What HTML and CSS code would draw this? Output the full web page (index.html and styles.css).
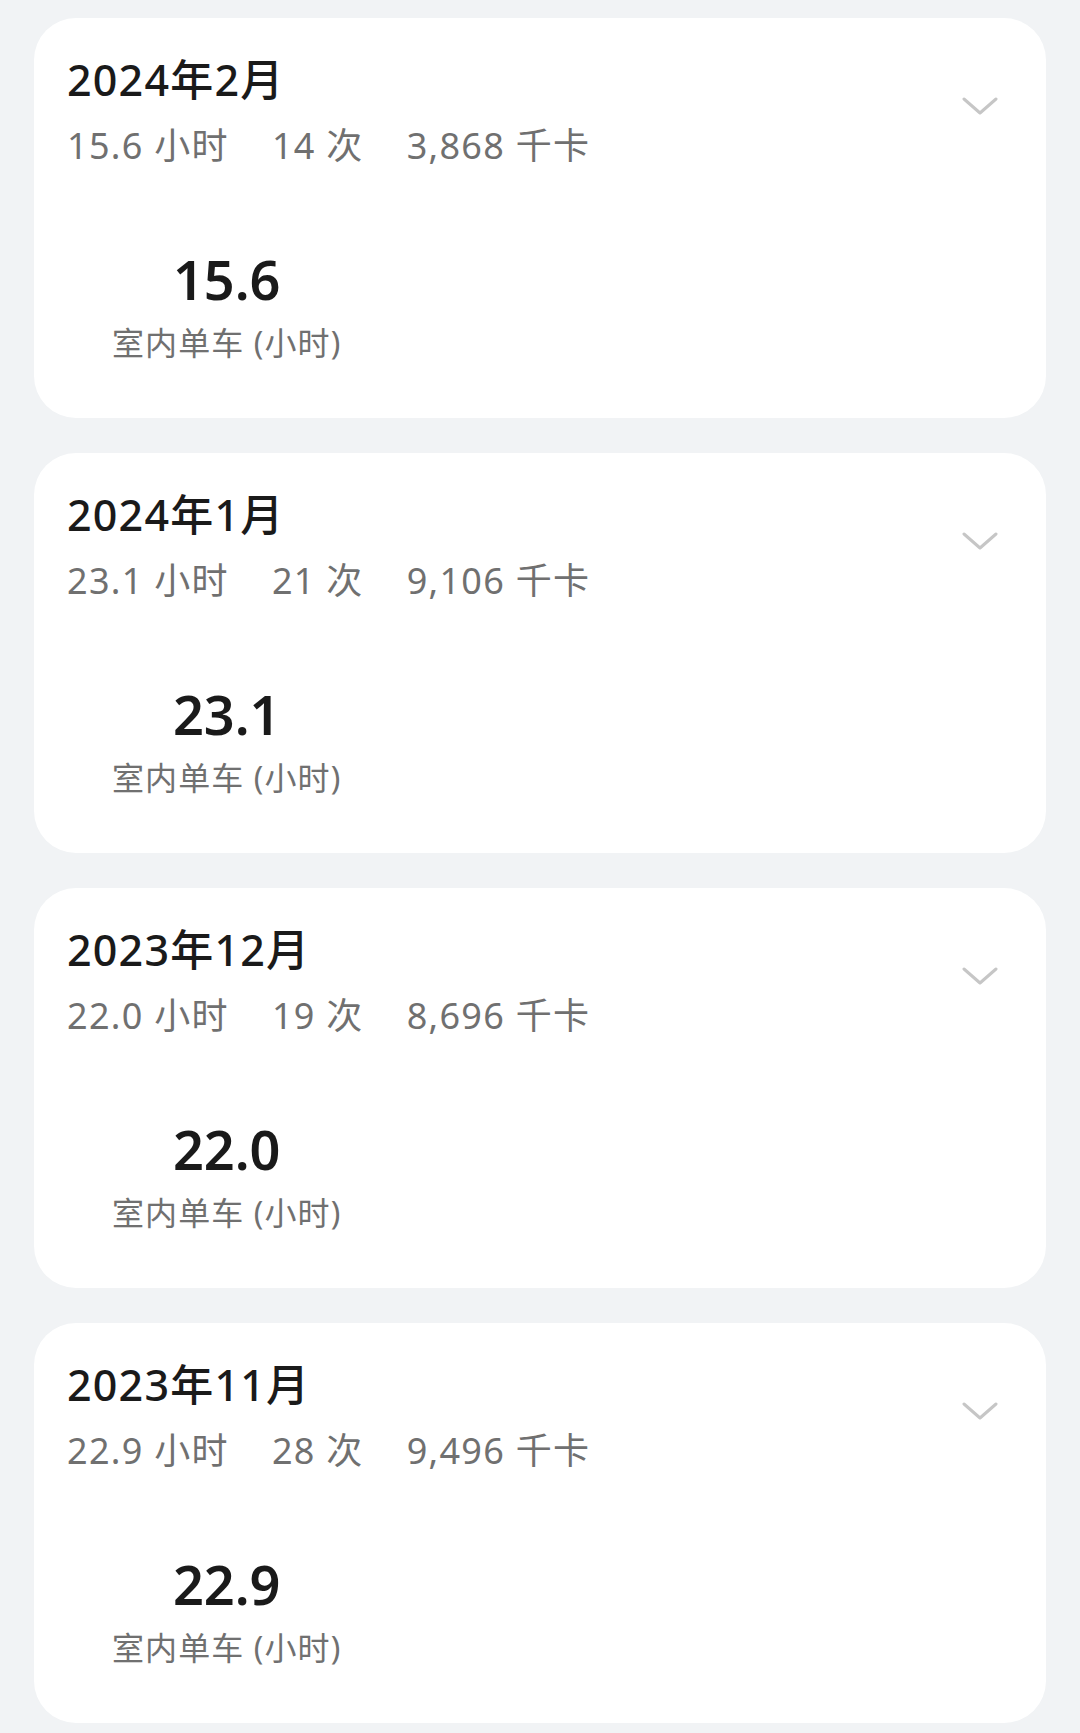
FILE: index.html
```html
<!DOCTYPE html>
<html lang="zh-CN">
<head>
  <meta charset="UTF-8">
  <title>运动记录</title>
  <link rel="stylesheet" href="styles.css">
</head>
<body>

<div class="month-list">

  <div class="month-card">
    <div class="month-head">
      <div>
        <h2 class="month-title">2024年2月</h2>
        <div class="month-stats">
          <span>15.6 小时</span>
          <span>14 次</span>
          <span>3,868 千卡</span>
        </div>
      </div>
      <svg class="chevron" viewBox="0 0 36 18" width="36" height="18">
        <polyline points="2,2 18,16 34,2" />
      </svg>
    </div>
    <div class="sport-item">
      <div class="sport-value">15.6</div>
      <div class="sport-label">室内单车 (小时)</div>
    </div>
  </div>

  <div class="month-card">
    <div class="month-head">
      <div>
        <h2 class="month-title">2024年1月</h2>
        <div class="month-stats">
          <span>23.1 小时</span>
          <span>21 次</span>
          <span>9,106 千卡</span>
        </div>
      </div>
      <svg class="chevron" viewBox="0 0 36 18" width="36" height="18">
        <polyline points="2,2 18,16 34,2" />
      </svg>
    </div>
    <div class="sport-item">
      <div class="sport-value">23.1</div>
      <div class="sport-label">室内单车 (小时)</div>
    </div>
  </div>

  <div class="month-card">
    <div class="month-head">
      <div>
        <h2 class="month-title">2023年12月</h2>
        <div class="month-stats">
          <span>22.0 小时</span>
          <span>19 次</span>
          <span>8,696 千卡</span>
        </div>
      </div>
      <svg class="chevron" viewBox="0 0 36 18" width="36" height="18">
        <polyline points="2,2 18,16 34,2" />
      </svg>
    </div>
    <div class="sport-item">
      <div class="sport-value">22.0</div>
      <div class="sport-label">室内单车 (小时)</div>
    </div>
  </div>

  <div class="month-card">
    <div class="month-head">
      <div>
        <h2 class="month-title">2023年11月</h2>
        <div class="month-stats">
          <span>22.9 小时</span>
          <span>28 次</span>
          <span>9,496 千卡</span>
        </div>
      </div>
      <svg class="chevron" viewBox="0 0 36 18" width="36" height="18">
        <polyline points="2,2 18,16 34,2" />
      </svg>
    </div>
    <div class="sport-item">
      <div class="sport-value">22.9</div>
      <div class="sport-label">室内单车 (小时)</div>
    </div>
  </div>

</div>

</body>
</html>
```

FILE: styles.css
```css
body {
  margin: 0;
  background-color: #f1f3f5;
  font-family: "Noto Sans", "Noto Sans CJK SC", sans-serif;
}
.month-list {
  display: flex;
  flex-direction: column;
  gap: 35px;
  padding: 18px 34px;
}
.month-card {
  background-color: #fff;
  border-radius: 42px;
  padding: 36px 48px 55px 33px;
}
.month-head {
  display: flex;
  justify-content: space-between;
  align-items: flex-start;
}
.month-title {
  margin: 0;
  font-size: 43px;
  line-height: 52px;
  font-weight: 500;
  letter-spacing: 1.2px;
  color: #1a1a1a;
}
.month-stats {
  display: flex;
  gap: 43px;
  margin-top: 18px;
  font-size: 36px;
  line-height: 44px;
  letter-spacing: 1.3px;
  color: #707070;
}
.chevron {
  margin-top: 43px;
  fill: none;
  stroke: #c6c6c6;
  stroke-width: 3;
  stroke-linecap: round;
  stroke-linejoin: round;
}
.sport-item {
  display: inline-flex;
  flex-direction: column;
  align-items: center;
  margin: 79px 0 0 45px;
}
.sport-value {
  font-size: 54px;
  line-height: 64px;
  font-weight: 600;
  color: #1a1a1a;
}
.sport-label {
  margin-top: 12px;
  font-size: 32px;
  line-height: 40px;
  letter-spacing: 1.1px;
  color: #707070;
}
```
